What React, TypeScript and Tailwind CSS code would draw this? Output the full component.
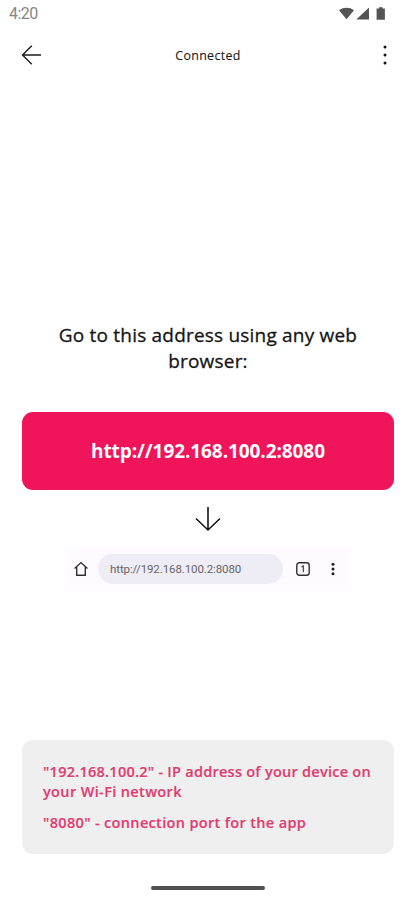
const ADDRESS = "http://192.168.100.2:8080"

function StatusBar() {
  return (
    <div className="flex h-7 items-center justify-between pl-[9px] pr-[29px] font-['Roboto',sans-serif]">
      <span className="text-[16px] leading-7 tracking-[-0.5px] text-[#858585]">4:20</span>
      <svg width="48" height="16" viewBox="0 0 48 16" fill="#555555" className="mb-px">
        <path d="M1 4.2C5.3.9 11.7.9 16 4.2L8.5 13.2Z" />
        <path d="M18.3 13.5L31 1.5V13.5Z" />
        <path d="M41 1.3h3.6v1.3h2.3v11.2h-8.3V2.6H41Z" />
      </svg>
    </div>
  )
}

function Header() {
  return (
    <header className="flex h-[54px] items-center justify-between pl-[21px] pr-[28px]">
      <svg width="20" height="20" viewBox="0 0 20 20" fill="none" stroke="#1c1c1c" strokeWidth="1.4">
        <path d="M20 10H1.5M10.8 .8L1.5 10l9.3 9.2" />
      </svg>
      <h1 className="mr-2 mt-px text-[12.4px] leading-5 tracking-[0.35px] text-[#1a1a1a] [-webkit-text-stroke:0.1px]">Connected</h1>
      <svg width="4" height="20" viewBox="0 0 4 20" fill="#111111">
        <circle cx="2" cy="2" r="1.5" />
        <circle cx="2" cy="10" r="1.5" />
        <circle cx="2" cy="18" r="1.5" />
      </svg>
    </header>
  )
}

function BrowserBar() {
  return (
    <div className="mx-auto mt-[15px] flex h-11 w-[286px] items-center bg-[#fdfbff] pl-[9px] pr-[16px]">
      <svg width="14" height="16" viewBox="0 0 14 16" fill="none" stroke="#303030" strokeWidth="1.4">
        <path d="M.6 7.6L7 1.6l6.4 6M2.7 6v8.2h8.6V6" />
      </svg>
      <div className="ml-[10px] flex h-[30px] w-[185px] items-center rounded-full bg-[#eeecf5] pl-3 pt-0.5 font-['Roboto',sans-serif] text-[11.5px] tracking-[-0.1px] text-[#666666]">
        {ADDRESS}
      </div>
      <svg width="14" height="14" viewBox="0 0 14 14" fill="none" stroke="#303030" strokeWidth="1.4" className="ml-[13px]">
        <rect x=".8" y=".8" width="12.4" height="12.4" rx="2.4" />
        <path d="M5.5 5L7.3 4v6.3" strokeWidth="1.1" />
      </svg>
      <svg width="4" height="14" viewBox="0 0 4 14" fill="#222222" className="ml-auto">
        <circle cx="2" cy="2.2" r="1.5" />
        <circle cx="2" cy="7" r="1.5" />
        <circle cx="2" cy="11.8" r="1.5" />
      </svg>
    </div>
  )
}

export default function App() {
  return (
    <div className="flex h-[900px] w-full flex-col bg-white font-['Open_Sans','Noto_Sans',sans-serif]">
      <StatusBar />
      <Header />

      <main className="flex flex-1 flex-col pl-[22px] pr-[21px] pt-[240px]">
        <p className="text-center text-[19px] font-medium leading-[26px] tracking-[0.2px] text-[#151515] [-webkit-text-stroke:0.3px]">
          Go to this address using any web
          <br />
          browser:
        </p>

        <button className="mt-[37.5px] h-[78px] w-full rounded-[11px] bg-[#f0145a] pt-px text-[19px] font-bold tracking-[-0.08px] text-white">
          {ADDRESS}
        </button>

        <svg width="26" height="26" viewBox="0 0 26 26" fill="none" stroke="#151515" strokeWidth="1.6" className="mx-auto mt-4">
          <path d="M13 1v23M1 12.5L13 24l12-11.5" />
        </svg>

        <BrowserBar />

        {/* Explains the parts of the address */}
        <section className="mt-[149px] h-[114px] rounded-[11px] bg-[#efefef] pl-[21px] pt-[22.5px] text-[14.5px] font-semibold leading-5 tracking-[0.26px] text-[#df3c70] [-webkit-text-stroke:0.15px]">
          <p>
            "192.168.100.2" - IP address of your device on
            <br />
            <span className="tracking-[0.36px]">your Wi-Fi network</span>
          </p>
          <p className="mt-[11px] tracking-[0.34px]">"8080" - connection port for the app</p>
        </section>
      </main>

      <div className="mx-auto mb-[10px] h-1 w-[114px] rounded-full bg-[#505050]" />
    </div>
  )
}
